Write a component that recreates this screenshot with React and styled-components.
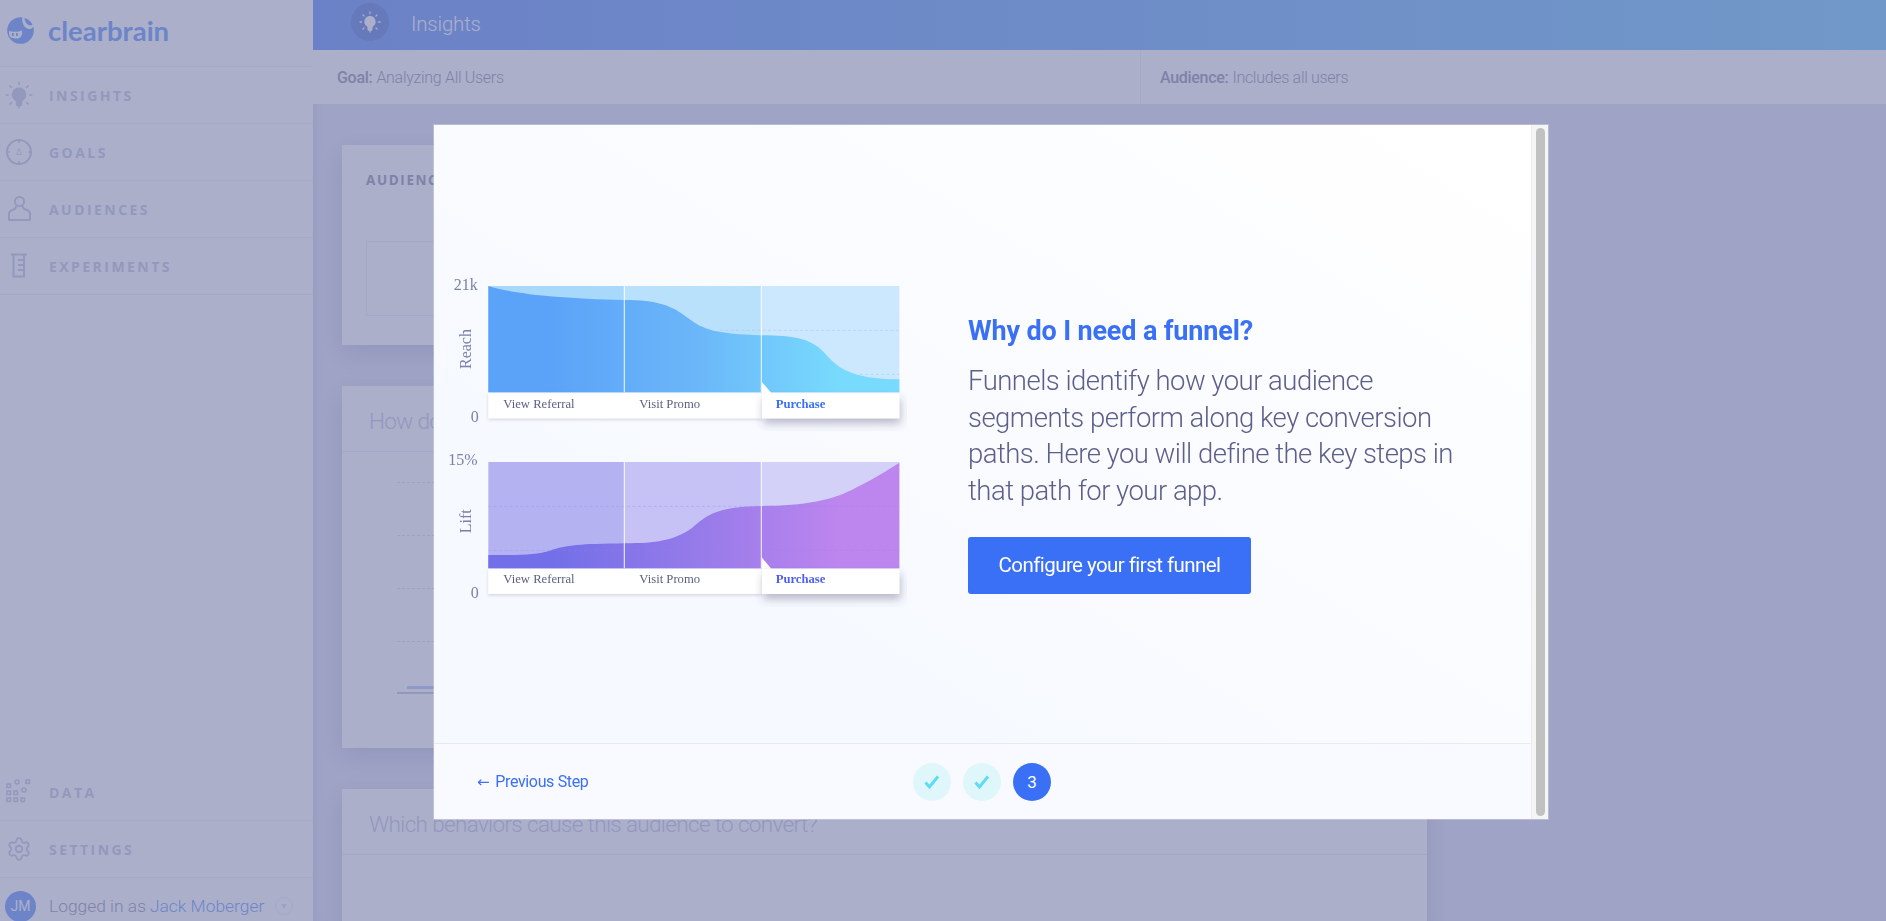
import React from "react";
import styled, { createGlobalStyle } from "styled-components";
import { Settings } from "lucide-react";

const Global = createGlobalStyle`
  html, body { margin: 0; padding: 0; height: 100%; overflow: hidden; }
  body { font-family: Roboto, "Liberation Sans", sans-serif; background: #e7e9f7; }
  * { box-sizing: border-box; }
`;

const Shell = styled.div`
  display: grid;
  grid-template-columns: 313px 1fr;
  height: 921px;
  overflow: hidden;
`;
const Sidebar = styled.aside`
  display: flex;
  flex-direction: column;
  background: #fff;
  height: 921px;
  color: #cfd1e5;
`;
const LogoRow = styled.div`
  display: flex;
  align-items: center;
  height: 67px;
  padding: 0 0 6px 7px;
  gap: 14px;
  border-bottom: 1px solid #f3f3f7;
`;
const LogoText = styled.span`
  font-family: Lato, sans-serif;
  font-weight: 700;
  font-size: 27.5px;
  letter-spacing: 0;
  color: #82abfb;
`;
const NavRow = styled.div`
  display: flex;
  align-items: center;
  height: 57px;
  gap: 0;
  border-bottom: 1px solid #f3f3f7;
`;
const NavIcon = styled.span`
  display: flex;
  justify-content: center;
  align-items: center;
  width: 49px;
  padding-right: 11px;
  flex: none;
`;
const NavLabel = styled.span`
  font-family: "Open Sans", sans-serif;
  font-weight: 700;
  font-size: 14px;
  letter-spacing: 2.45px;
`;
const Push = styled.div`
  margin-top: auto;
`;
const UserRow = styled.div`
  display: flex;
  align-items: center;
  height: 43px;
  padding: 13px 0 0 5px;
  font-size: 17.4px;
  font-weight: 300;
  color: #a5a5bb;
`;
const Avatar = styled.span`
  display: flex;
  align-items: center;
  justify-content: center;
  width: 31px;
  height: 31px;
  flex: none;
  border-radius: 50%;
  margin: 0 13px 0 0;
  background: #82abfb;
  color: #fff;
  font-size: 14px;
  font-weight: 400;
`;
const UserName = styled.span`
  color: #82abfb;
  margin-left: 4px;
`;
const Caret = styled.span`
  display: flex;
  align-items: center;
  justify-content: center;
  width: 18px;
  height: 18px;
  border-radius: 50%;
  margin-left: 11px;
  border: 1px solid #f0f0f6;
  &::after {
    content: "";
    border-left: 3.5px solid transparent;
    border-right: 3.5px solid transparent;
    border-top: 5px solid #e2e4ee;
  }
`;

const Main = styled.main`
  display: flex;
  flex-direction: column;
  min-width: 0;
  height: 921px;
  box-shadow: inset 8px 0 12px -8px rgba(60, 60, 110, 0.12);
`;
const TopBar = styled.header`
  display: flex;
  align-items: center;
  flex: none;
  height: 50px;
  padding-left: 38px;
  gap: 22px;
  background: linear-gradient(90deg, #7fa3f8 0%, #89d1fb 100%);
`;
const TopIcon = styled.span`
  display: flex;
  align-items: center;
  justify-content: center;
  width: 38px;
  height: 38px;
  margin-top: -6px;
  border-radius: 50%;
  background: #7393e1;
`;
const TopTitle = styled.span`
  font-size: 20.5px;
  font-weight: 300;
  color: #fff;
  letter-spacing: -0.2px;
  padding-bottom: 2px;
`;
const GoalBar = styled.div`
  display: grid;
  grid-template-columns: 827px 1fr;
  flex: none;
  height: 54px;
  background: #fff;
  font-size: 16px;
  font-weight: 300;
  color: #a5a5bb;
  letter-spacing: -0.3px;
`;
const GoalCell = styled.div`
  display: flex;
  align-items: center;
  gap: 4px;
  padding-left: ${(p) => p.$pad}px;
  border-left: ${(p) => (p.$line ? "1px solid #f3f3f7" : "none")};
  b { font-weight: 500; }
`;
const Content = styled.div`
  display: flex;
  flex-direction: column;
  gap: 41px;
  padding: 41px 0 0 29px;
  width: 1114px;
`;
const Card = styled.section`
  flex: none;
  height: ${(p) => p.$h}px;
  background: #fff;
  box-shadow: 0 8px 22px rgba(50, 50, 110, 0.16);
`;
const CardHead = styled.div`
  display: flex;
  align-items: center;
  height: 66px;
  padding: 4px 0 0 27px;
  border-bottom: 1px solid #f1f1f6;
  font-size: 22.5px;
  font-weight: 300;
  letter-spacing: -0.65px;
  color: #cdd0e6;
`;
const Eyebrow = styled.div`
  font-family: "Open Sans", sans-serif;
  font-weight: 700;
  font-size: 13.5px;
  line-height: 18px;
  letter-spacing: 1.6px;
  color: #a5a5bb;
  padding: 26px 0 0 24px;
`;
const InnerBox = styled.div`
  height: 75px;
  margin: 52px 24px 0;
  border: 1px solid #f1f1f6;
`;
const GraphArea = styled.div`
  padding: 30px 0 0 55px;
`;
const GridLine = styled.div`
  height: 0;
  margin-bottom: 52px;
  border-top: 1px dashed #e4e4ee;
`;
const BaseLine = styled.div`
  height: 2px;
  margin-top: -2px;
  background: #cfd1e0;
  position: relative;
  &::before {
    content: "";
    position: absolute;
    left: 10px;
    right: 0;
    top: -6px;
    height: 3px;
    background: #c5d4f8;
  }
`;

const Overlay = styled.div`
  position: fixed;
  inset: 0;
  padding: 125px 0 0 434px;
  background: rgba(87, 95, 149, 0.5);
`;
const Modal = styled.div`
  display: flex;
  width: 1114px;
  height: 694px;
  background: linear-gradient(to bottom left, #ffffff 0%, #f6f9ff 70%);
  box-shadow: 0 0 0 1px rgba(255, 255, 255, 0.25);
`;
const ModalMain = styled.div`
  display: flex;
  flex-direction: column;
  flex: 1;
  min-width: 0;
`;
const ModalBody = styled.div`
  display: flex;
  flex: 1;
  padding: 145px 0 0 6px;
`;
const Illustration = styled.svg`
  display: block;
  flex: none;
  width: 480px;
  height: 340px;
`;
const Pitch = styled.div`
  display: flex;
  flex-direction: column;
  align-items: flex-start;
  margin: 42px 0 0 48px;
`;
const PitchTitle = styled.h2`
  margin: 0;
  font-size: 27px;
  line-height: 38px;
  font-weight: 700;
  color: #3a70f5;
  letter-spacing: -0.15px;
`;
const PitchText = styled.p`
  margin: 13px 0 0;
  width: 495px;
  font-size: 27.5px;
  line-height: 36.7px;
  font-weight: 300;
  color: #5d5f8a;
  letter-spacing: -0.52px;
`;
const PrimaryButton = styled.button`
  display: flex;
  align-items: center;
  justify-content: center;
  width: 283px;
  height: 57px;
  margin-top: 27px;
  border: 0;
  border-radius: 3px;
  background: #3a70f5;
  color: #fff;
  font-family: Roboto, sans-serif;
  font-size: 20.5px;
  font-weight: 400;
  letter-spacing: -0.55px;
`;
const ModalFoot = styled.footer`
  display: flex;
  align-items: center;
  flex: none;
  height: 76px;
  padding-left: 43px;
  border-top: 1px solid #e7e9f5;
  background: #f9faff;
`;
const BackLink = styled.a`
  display: flex;
  align-items: center;
  gap: 6px;
  width: 436px;
  font-size: 16px;
  letter-spacing: -0.35px;
  color: #3a70f5;
`;
const BackArrow = styled.span`
  font-family: "DejaVu Sans", sans-serif;
  font-size: 15px;
  line-height: 16px;
`;
const Steps = styled.div`
  display: flex;
  gap: 12px;
`;
const Step = styled.span`
  display: flex;
  align-items: center;
  justify-content: center;
  width: 38px;
  height: 38px;
  border-radius: 50%;
  background: ${(p) => (p.$current ? "#3a70f5" : "#dff7fb")};
  color: #fff;
  font-size: 17px;
`;
const Track = styled.div`
  flex: none;
  width: 17px;
  padding: 3px 3px 3px 4px;
  background: #f5f5f5;
  border-left: 1px solid #ececec;
`;
const Thumb = styled.div`
  height: 100%;
  border-radius: 5px;
  background: #c1c1c1;
`;

const Ink = "#cfd1e5";

function Bulb({ color = Ink, size = 28 }) {
  const rays = [0, 45, 90, 135, 180, 225, 270, 315];
  return (
    <svg width={size} height={size} viewBox="0 0 28 28" fill="none">
      {rays.map((a) => (
        <line key={a} x1="14" y1="1.2" x2="14" y2="3.2" stroke={color} strokeWidth="1.6" strokeLinecap="round" transform={`rotate(${a} 14 14)`} />
      ))}
      <path d="M14 6.4a7.2 7.2 0 0 0-4.2 13c.8.6 1 1.2 1 2v2.2c0 .9.7 1.6 1.6 1.6h3.2c.9 0 1.6-.7 1.6-1.6v-2.2c0-.8.2-1.4 1-2A7.2 7.2 0 0 0 14 6.4z" fill={color} />
    </svg>
  );
}
function Compass() {
  return (
    <svg width="28" height="28" viewBox="0 0 28 28" fill="none" stroke={Ink}>
      <circle cx="14" cy="14" r="12" strokeWidth="2" />
      <path d="M14 2v3M14 23v3M2 14h3M23 14h3" strokeWidth="1.6" />
      <path d="M14 10.500l-2.400 6h4.800z" strokeWidth="0.8" />
    </svg>
  );
}
function Person() {
  return (
    <svg width="28" height="28" viewBox="0 0 28 28" fill="none" stroke={Ink} strokeWidth="2">
      <circle cx="14.500" cy="6.500" r="4.600" />
      <path d="M11 11c.3 2.500-1 3.200-3 3.800-2.600.8-4 1.700-4 4V25h21v-6.200c0-2.300-1.500-3.200-4-4-2-.6-3.500-1.300-3-3.800" strokeLinejoin="round" />
    </svg>
  );
}
function Flask() {
  return (
    <svg width="28" height="28" viewBox="0 0 28 28" fill="none" stroke={Ink} strokeWidth="2">
      <path d="M6 2.500h16M8.500 2.500v22h10.500v-22" />
      <path d="M13 8h6M13 13h6M13 18h6" />
    </svg>
  );
}
function DataDots() {
  const sq = [
    [2, 5], [2, 12], [2, 19], [9, 12], [9, 19], [16, 19], [21, 1],
  ];
  const dots = [[12, 3], [19, 11]];
  return (
    <svg width="28" height="26" viewBox="0 0 28 26" fill="none" stroke={Ink} strokeWidth="1.500">
      {sq.map(([x, y]) => (
        <rect key={`${x}-${y}`} x={x} y={y} width="3.500" height="3.500" />
      ))}
      {dots.map(([x, y]) => (
        <circle key={x} cx={x} cy={y} r="2" />
      ))}
    </svg>
  );
}
function Logo() {
  return (
    <svg width="27" height="27" viewBox="0 0 27 27">
      <circle cx="13.500" cy="13.500" r="13.300" fill="#82abfb" />
      <path d="M15.500 0C14 6 18 12.500 23 12C25.500 11.800 26.800 9.500 27 7C25 9.300 21 8.800 19 5.800C18 4 17.500 2 17.500 0Z" fill="#fff" />
      <path d="M2 14C5.500 15.200 12 15 15 13.500C15.500 17.500 14.500 20.500 11.500 21.200C8.500 21.800 4.800 21.300 3 19.800C2.200 18 1.800 16 2 14Z" fill="#fff" />
      <rect x="5" y="16" width="1.800" height="3" fill="#82abfb" />
      <rect x="9" y="16" width="1.800" height="3" fill="#82abfb" />
    </svg>
  );
}
function Tick() {
  return (
    <svg width="18" height="18" viewBox="0 0 18 18" fill="none">
      <path d="M2.500 9.500l4 4.500L15 3.500" stroke="#5edcf4" strokeWidth="3" />
    </svg>
  );
}

function Labels({ y, accent }) {
  return (
    <g fontFamily="'Liberation Serif', serif" fontSize="38">
      <rect x="145" y={y} width="820" height="75" fill="#fff" filter="url(#soft)" />
      <rect x="966" y={y} width="412" height="75" fill="#fff" filter="url(#hard)" />
      <text x="190" y={y + 43} fill="#5d5f80">View Referral</text>
      <text x="598" y={y + 43} fill="#5d5f80">Visit Promo</text>
      <text x="1007" y={y + 43} fill={accent} fontWeight="700">Purchase</text>
    </g>
  );
}

function Funnel() {
  return (
    <Illustration viewBox="0 0 1440 1020">
      <defs>
        <linearGradient id="reach" x1="0" x2="1" y1="0" y2="0">
          <stop offset="0.15" stopColor="#5ba3f8" />
          <stop offset="0.5" stopColor="#6ab6f9" />
          <stop offset="0.85" stopColor="#78dafd" />
        </linearGradient>
        <linearGradient id="lift" x1="0" x2="1" y1="0" y2="0">
          <stop offset="0.15" stopColor="#726fe8" />
          <stop offset="0.55" stopColor="#9a7cea" />
          <stop offset="0.85" stopColor="#bd85ee" />
        </linearGradient>
        <filter id="soft" x="-5%" y="-20%" width="110%" height="150%">
          <feDropShadow dx="0" dy="4" stdDeviation="5" floodColor="#50507a" floodOpacity="0.22" />
        </filter>
        <filter id="hard" x="-5%" y="-20%" width="110%" height="170%">
          <feDropShadow dx="4" dy="16" stdDeviation="12" floodColor="#40406a" floodOpacity="0.35" />
        </filter>
      </defs>

      <rect x="145" y="48" width="408" height="319" fill="#a8d9fb" />
      <rect x="553" y="48" width="411" height="319" fill="#b9e1fb" />
      <rect x="964" y="48" width="414" height="319" fill="#cbe8fe" />
      <path d="M145 48C225 72 350 85 553 90C650 90 695 105 745 145C790 180 830 192 964 196C1060 196 1110 205 1150 245C1195 295 1230 326 1378 328L1378 367L145 367Z" fill="url(#reach)" />
      <path d="M840 181H1378M1260 313H1378" stroke="#9cc4ee" strokeWidth="2" strokeDasharray="9 7" opacity="0.7" />
      <path d="M553 48V367M964 48V367" stroke="#fff" strokeWidth="3.500" opacity="0.8" />
      <Labels y={370} accent="#3a70f5" />
      <path d="M965 335L994 369H965Z" fill="#fff" />

      <rect x="145" y="576" width="408" height="319" fill="#b5b2f2" />
      <rect x="553" y="576" width="411" height="319" fill="#c6c2f6" />
      <rect x="964" y="576" width="414" height="319" fill="#d4d1f8" />
      <path d="M145 855C230 856 290 855 330 842C380 825 420 822 553 820C650 820 700 812 755 775C800 735 830 710 964 708C1090 708 1180 692 1250 652C1310 622 1340 602 1378 578L1378 895L145 895Z" fill="url(#lift)" />
      <path d="M145 709H1378M145 841H1378" stroke="#8f86e0" strokeWidth="2" strokeDasharray="9 7" opacity="0.5" />
      <path d="M553 576V895M964 576V895" stroke="#fff" strokeWidth="3.500" opacity="0.8" />
      <Labels y={897} accent="#4f5ff0" />
      <path d="M965 862L994 896H965Z" fill="#fff" />

      <g fontFamily="'Liberation Serif', serif" fontSize="48" fill="#7c80a8">
        <text x="113" y="60" textAnchor="end">21k</text>
        <text x="116" y="457" textAnchor="end">0</text>
        <text x="113" y="586" textAnchor="end">15%</text>
        <text x="116" y="983" textAnchor="end">0</text>
        <text transform="translate(93 297) rotate(-90)">Reach</text>
        <text transform="translate(93 790) rotate(-90)">Lift</text>
      </g>
    </Illustration>
  );
}

export default function App() {
  return (
    <>
      <Global />
      <Shell>
        <Sidebar>
          <LogoRow>
            <Logo />
            <LogoText>clearbrain</LogoText>
          </LogoRow>
          <NavRow><NavIcon><Bulb /></NavIcon><NavLabel>INSIGHTS</NavLabel></NavRow>
          <NavRow><NavIcon><Compass /></NavIcon><NavLabel>GOALS</NavLabel></NavRow>
          <NavRow><NavIcon><Person /></NavIcon><NavLabel>AUDIENCES</NavLabel></NavRow>
          <NavRow><NavIcon><Flask /></NavIcon><NavLabel>EXPERIMENTS</NavLabel></NavRow>
          <Push />
          <NavRow><NavIcon><DataDots /></NavIcon><NavLabel>DATA</NavLabel></NavRow>
          <NavRow><NavIcon><Settings size={26} strokeWidth={1.7} color={Ink} /></NavIcon><NavLabel>SETTINGS</NavLabel></NavRow>
          <UserRow>
            <Avatar>JM</Avatar>
            Logged in as <UserName>Jack Moberger</UserName>
            <Caret />
          </UserRow>
        </Sidebar>
        <Main>
          <TopBar>
            <TopIcon><Bulb color="#fff" size={22} /></TopIcon>
            <TopTitle>Insights</TopTitle>
          </TopBar>
          <GoalBar>
            <GoalCell $pad={24}><b>Goal:</b> Analyzing All Users</GoalCell>
            <GoalCell $pad={19} $line><b>Audience:</b> Includes all users</GoalCell>
          </GoalBar>
          <Content>
            <Card $h={200}>
              <Eyebrow>AUDIENCE OVERVIEW</Eyebrow>
              <InnerBox />
            </Card>
            <Card $h={362}>
              <CardHead>How do users convert over time?</CardHead>
              <GraphArea>
                <GridLine />
                <GridLine />
                <GridLine />
                <GridLine />
                <BaseLine />
              </GraphArea>
            </Card>
            <Card $h={300}>
              <CardHead>Which behaviors cause this audience to convert?</CardHead>
            </Card>
          </Content>
        </Main>
      </Shell>
      <Overlay>
        <Modal>
          <ModalMain>
            <ModalBody>
              <Funnel />
              <Pitch>
                <PitchTitle>Why do I need a funnel?</PitchTitle>
                <PitchText>
                  Funnels identify how your audience segments perform along key conversion paths. Here you will define the key steps in that path for your app.
                </PitchText>
                <PrimaryButton>Configure your first funnel</PrimaryButton>
              </Pitch>
            </ModalBody>
            <ModalFoot>
              <BackLink><BackArrow>←</BackArrow>Previous Step</BackLink>
              <Steps>
                <Step><Tick /></Step>
                <Step><Tick /></Step>
                <Step $current>3</Step>
              </Steps>
            </ModalFoot>
          </ModalMain>
          <Track><Thumb /></Track>
        </Modal>
      </Overlay>
    </>
  );
}
